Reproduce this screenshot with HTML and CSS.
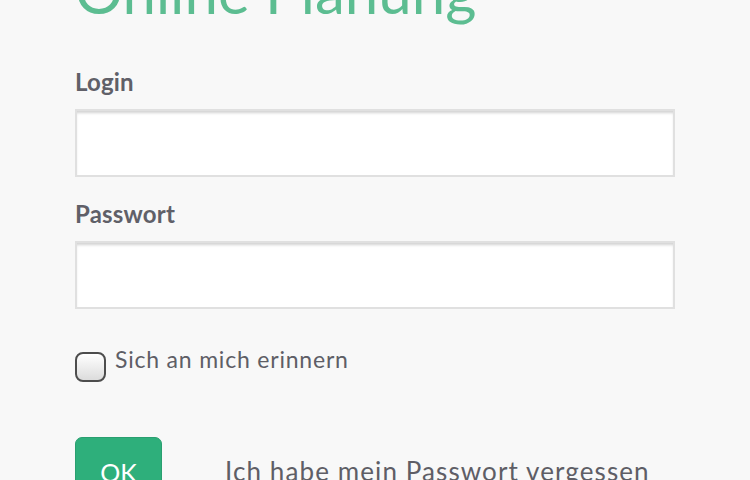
FILE: index.html
```html
<!DOCTYPE html>
<html lang="de">
<head>
<meta charset="utf-8">
<title>Online Planung</title>
<link rel="stylesheet" href="styles.css">
</head>
<body>
<main class="page">
  <h1 class="title">Online Planung</h1>
  <form class="login-form">
    <label class="field-label" for="login">Login</label>
    <input class="text-input" id="login" type="text">
    <label class="field-label" for="pw">Passwort</label>
    <input class="text-input" id="pw" type="password">
    <label class="remember">
      <span class="checkbox"></span>
      <span class="remember-text">Sich an mich erinnern</span>
    </label>
    <div class="actions">
      <button class="ok-button" type="button">OK</button>
      <a class="forgot-link" href="#">Ich habe mein Passwort vergessen</a>
    </div>
  </form>
</main>
</body>
</html>
```

FILE: styles.css
```css
html, body {
  margin: 0;
  padding: 0;
  background: #f8f8f8;
  font-family: Lato, "Noto Sans", sans-serif;
  color: #5e5e66;
  overflow: hidden;
}

.page {
  width: 600px;
  margin-left: 75px;
}

.title {
  margin: -46px 0 0 0;
  font-size: 60px;
  line-height: 74px;
  font-weight: normal;
  color: #5cbd91;
  white-space: nowrap;
}

.login-form {
  display: flex;
  flex-direction: column;
  align-items: flex-start;
  padding-top: 39px;
}

.field-label {
  font-size: 24px;
  font-weight: bold;
  line-height: 29px;
  margin-bottom: 13px;
  color: #606068;
  letter-spacing: 0.2px;
}

.text-input {
  box-sizing: border-box;
  width: 600px;
  height: 68px;
  border: 2px solid #e0e0e0;
  background: #fff;
  box-shadow: inset 0 3px 3px -1px #d2d2d2;
  margin: 0 0 22px 0;
  padding: 0 10px;
  font-size: 20px;
}

.remember {
  display: flex;
  align-items: flex-start;
  gap: 9px;
  margin-top: 14px;
  font-size: 23px;
  line-height: 28px;
  letter-spacing: 0.8px;
}

.checkbox {
  box-sizing: border-box;
  width: 31px;
  height: 30px;
  border: 2px solid #4d4d4d;
  border-radius: 8px;
  background: linear-gradient(#ffffff, #dcdcdc);
  margin-top: 7px;
}

.actions {
  display: flex;
  align-items: flex-start;
  gap: 63px;
  margin-top: 55px;
}

.ok-button {
  box-sizing: border-box;
  width: 87px;
  height: 62px;
  border: 1px solid #2a9f70;
  border-radius: 7px;
  background: #2eaf7b;
  color: #fff;
  font-family: inherit;
  font-size: 25px;
  line-height: 30px;
  padding: 7px 0 0 0;
  text-align: center;
  display: block;
}

.forgot-link {
  font-size: 26px;
  line-height: 31px;
  color: #5e5e66;
  text-decoration: none;
  margin-top: 19px;
  white-space: nowrap;
  letter-spacing: 1.1px;
}
```
